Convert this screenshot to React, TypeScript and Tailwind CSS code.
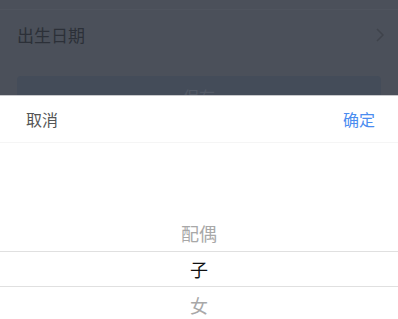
import React from 'react';

const font = { fontFamily: '"Noto Sans CJK SC", "Noto Sans", sans-serif' };

export default function App() {
  const items = ['配偶', '子', '女'];
  return (
    <div className="relative h-[319px] w-[398px] overflow-hidden bg-[#4b505a]" style={font}>
      {/* page under the mask */}
      <div className="h-[10px] border-b border-[#4f545e]" />
      <div className="flex h-[50px] items-center justify-between pl-[17px] pr-[14px]">
        <span className="text-[17px] text-[#2c3038]">出生日期</span>
        <svg width="8" height="14" viewBox="0 0 8 14" fill="none">
          <path d="M1 1l6 6-6 6" stroke="#3f434b" strokeWidth="1.5" />
        </svg>
      </div>
      <div className="mx-[17px] mt-[16px] flex h-[40px] items-center justify-center rounded-[4px] bg-[#444c59]">
        <span className="text-[16px] text-[#535a66]">保存</span>
      </div>

      {/* bottom sheet */}
      <div className="absolute inset-x-0 top-[95px] bottom-0 border-t border-[#c8c9cc] bg-white">
        <div className="flex h-[47px] items-center justify-between border-b border-[#f5f5f5] pl-[26px] pr-[23px] text-[16px]">
          <span className="text-[#555]">取消</span>
          <span className="text-[#4a8cf0]">确定</span>
        </div>
        <div className="pt-[72px]">
          {items.map((t, i) => (
            <div
              key={t}
              className={
                i === 1
                  ? 'flex h-[36px] items-center justify-center border-y border-[#e0e0e0] text-[18px] text-[#111]'
                  : 'flex h-[36px] items-center justify-center text-[18px] text-[#a8a8a8]'
              }
            >
              {t}
            </div>
          ))}
        </div>
      </div>
    </div>
  );
}
